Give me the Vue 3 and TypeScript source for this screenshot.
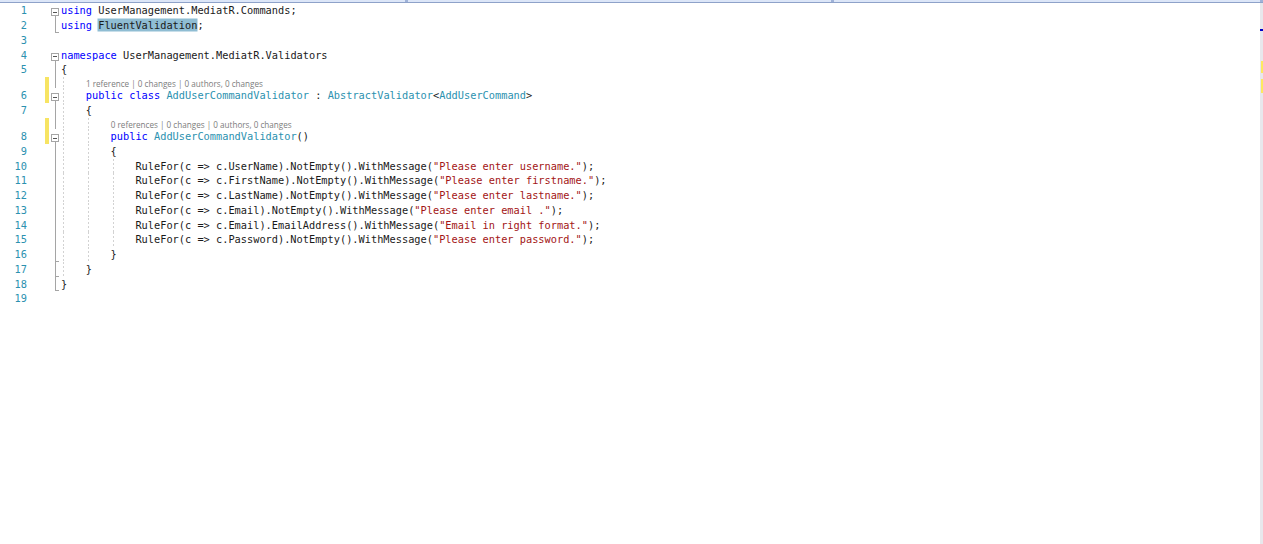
<script setup lang="ts">
type Tok = { t: string; c?: string };
type Row = { n?: number; lens?: string; fold: string; mark?: boolean; guides: number; toks?: Tok[] };

const K = "kw", T = "ty", S = "st", H = "hl";
const rule = (prop: string, tail: string, msg: string): Tok[] => [
  { t: `            RuleFor(c => c.${prop}).${tail}().WithMessage(` },
  { t: `"${msg}"`, c: S },
  { t: ");" },
];

const rows: Row[] = [
  { n: 1, fold: "box", guides: 0, toks: [{ t: "using", c: K }, { t: " UserManagement.MediatR.Commands;" }] },
  { n: 2, fold: "end", guides: 0, toks: [{ t: "using", c: K }, { t: " " }, { t: "FluentValidation", c: H }, { t: ";" }] },
  { n: 3, fold: "", guides: 0, toks: [] },
  { n: 4, fold: "box", guides: 0, toks: [{ t: "namespace", c: K }, { t: " UserManagement.MediatR.Validators" }] },
  { n: 5, fold: "line", guides: 0, toks: [{ t: "{" }] },
  { lens: "1 reference | 0 changes | 0 authors, 0 changes", fold: "line", mark: true, guides: 1 },
  { n: 6, fold: "box", mark: true, guides: 1, toks: [{ t: "    " }, { t: "public class", c: K }, { t: " " }, { t: "AddUserCommandValidator", c: T }, { t: " : " }, { t: "AbstractValidator", c: T }, { t: "<" }, { t: "AddUserCommand", c: T }, { t: ">" }] },
  { n: 7, fold: "line", guides: 1, toks: [{ t: "    {" }] },
  { lens: "0 references | 0 changes | 0 authors, 0 changes", fold: "line", mark: true, guides: 2 },
  { n: 8, fold: "box", mark: true, guides: 2, toks: [{ t: "        " }, { t: "public", c: K }, { t: " " }, { t: "AddUserCommandValidator", c: T }, { t: "()" }] },
  { n: 9, fold: "line", guides: 2, toks: [{ t: "        {" }] },
  { n: 10, fold: "line", guides: 3, toks: rule("UserName", "NotEmpty", "Please enter username.") },
  { n: 11, fold: "line", guides: 3, toks: rule("FirstName", "NotEmpty", "Please enter firstname.") },
  { n: 12, fold: "line", guides: 3, toks: rule("LastName", "NotEmpty", "Please enter lastname.") },
  { n: 13, fold: "line", guides: 3, toks: rule("Email", "NotEmpty", "Please enter email .") },
  { n: 14, fold: "line", guides: 3, toks: rule("Email", "EmailAddress", "Email in right format.") },
  { n: 15, fold: "line", guides: 3, toks: rule("Password", "NotEmpty", "Please enter password.") },
  { n: 16, fold: "tick", guides: 2, toks: [{ t: "        }" }] },
  { n: 17, fold: "tick", guides: 1, toks: [{ t: "    }" }] },
  { n: 18, fold: "end", guides: 0, toks: [{ t: "}" }] },
  { n: 19, fold: "", guides: 0, toks: [] },
];
</script>

<template>
  <div class="ide">
    <div class="tabs">
      <div class="pane"></div>
      <div class="pane"></div>
      <div class="pane last"></div>
    </div>
    <div class="body">
      <div class="editor">
        <div v-for="(r, i) in rows" :key="i" class="row" :class="{ lensrow: r.lens }">
          <div class="num">{{ r.n }}</div>
          <div class="chg" :class="{ on: r.mark }"></div>
          <div class="fold" :class="r.fold"></div>
          <div class="code">
            <i v-for="g in r.guides" :key="g" class="guide" :style="{ left: (g - 1) * 24.9 + 2 + 'px' }"></i>
            <span v-if="r.lens" class="lens" :style="{ marginLeft: r.guides * 24.9 + 'px' }">{{ r.lens }}</span>
            <template v-else>
              <span v-for="(k, j) in r.toks" :key="j" :class="k.c">{{ k.t }}</span>
            </template>
          </div>
        </div>
      </div>
      <div class="scroll">
        <div class="caret"></div>
        <div class="smark first"></div>
        <div class="smark second"></div>
      </div>
    </div>
  </div>
</template>

<style>
html, body { margin: 0; background: #fff; }
</style>

<style scoped>
.ide { width: 1263px; height: 544px; display: flex; flex-direction: column; overflow: hidden; background: #fff; }
.tabs { display: flex; height: 3px; flex: none; background: #dce6f8; border-bottom: 1px solid #8ea2c9; box-sizing: border-box; }
.pane { width: 426px; box-sizing: border-box; border-right: 3px solid #9fb2d8; }
.pane:first-child { width: 408px; }
.pane.last { flex: 1; }
.body { flex: 1; display: flex; min-height: 0; }
.editor { flex: 1; padding-top: 0.35px; }
.row { display: flex; height: 14.75px; font: 10.3px/14.75px "DejaVu Sans Mono", "Liberation Mono", monospace; color: #1a1a1a; }
.lensrow { height: 11.25px; line-height: 11.25px; }
.num { width: 27px; flex: none; text-align: right; color: #2b91af; }
.chg { width: 4px; flex: none; margin-left: 18px; }
.chg.on { background: #f7e463; }
.fold { width: 12px; flex: none; position: relative; }
.fold.line::before, .fold.tick::before, .fold.end::before {
  content: ""; position: absolute; left: 6px; top: 0; bottom: 0; width: 1px; background: #a5a5a5;
}
.fold.tick::after, .fold.end::after {
  content: ""; position: absolute; left: 6px; bottom: 0; width: 4px; height: 1px; background: #a5a5a5;
}
.fold.box::before {
  content: ""; position: absolute; left: 2px; top: 5px; width: 6px; height: 6px; border: 1px solid #a5a5a5;
  background: linear-gradient(#555, #555) center / 4px 1px no-repeat #fff;
}
.fold.box::after {
  content: ""; position: absolute; left: 6px; top: 13px; bottom: 0; width: 1px; background: #a5a5a5;
}
.code { flex: 1; position: relative; white-space: pre; }
.guide { position: absolute; top: 0; bottom: 0; width: 1px; background: repeating-linear-gradient(to bottom, #d2d2d2 0 2px, transparent 2px 4px); }
.kw { color: #0000ff; }
.ty { color: #2b91af; }
.st { color: #a31515; }
.hl { background: #8fbdd3; box-shadow: 0 0 0 0.5px #8fbdd3; }
.lens { display: block; margin-top: 1px; font: 8.15px/11px "Open Sans", "Noto Sans", sans-serif; color: #7d7d7d; }
.scroll { width: 3px; flex: none; background: #e8e8ec; display: flex; flex-direction: column; }
.caret { height: 2px; margin-top: 26px; background: #0000c8; }
.smark { background: #fde95f; margin-left: 1px; }
.smark.first { height: 12px; margin-top: 30px; }
.smark.second { height: 14px; margin-top: 6px; }
</style>
